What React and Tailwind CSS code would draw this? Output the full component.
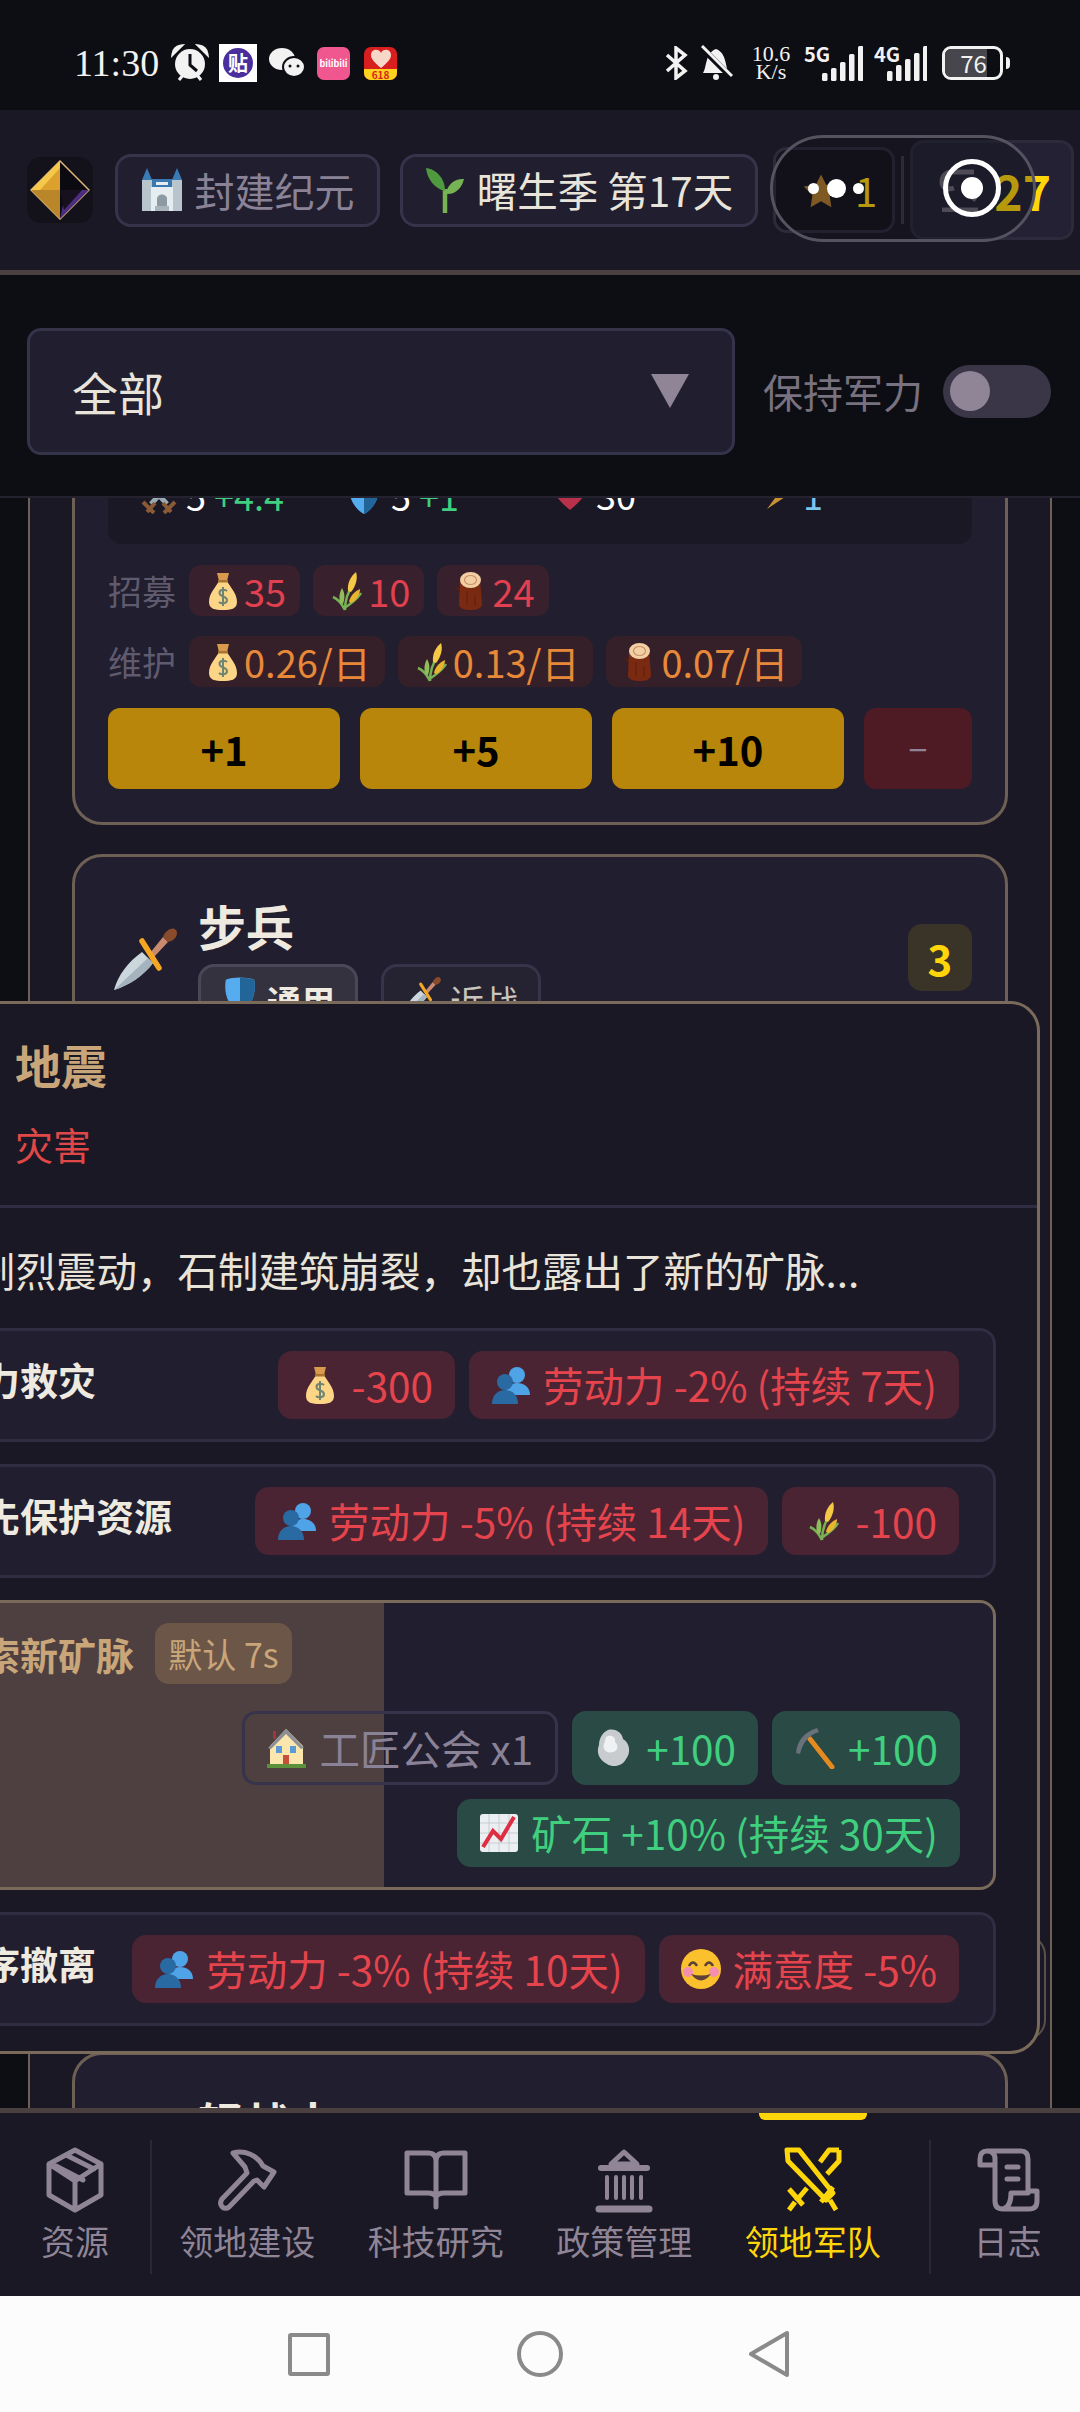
import React from 'react';

const Bag = ({ s = 40 }) => (
  <svg width={s} height={s} viewBox="0 0 40 40" className="shrink-0">
    <path d="M14 2 L26 2 L24 10 L16 10 Z" fill="#d99a4e" />
    <path d="M16 10 H24 C27 16 34 22 34 31 C34 38 28 39 20 39 C12 39 6 38 6 31 C6 22 13 16 16 10 Z" fill="#fcd586" />
    <rect x="15" y="9" width="10" height="2.5" fill="#a8722f" />
    <path d="M24 20 C22 18 16.500 18 16.500 22 C16.500 26 24 25 24 29 C24 33 18 33 16 31 M20 16 V35" stroke="#6f8572" strokeWidth="2" fill="none" />
  </svg>
);

const Corn = ({ s = 40 }) => (
  <svg width={s} height={s} viewBox="0 0 40 40" className="shrink-0">
    <path d="M18 39 C18 30 20 22 26 14 M18 39 C15 33 11 28 6 26 M19 36 C24 32 30 29 34 22" stroke="#76b255" strokeWidth="2.500" fill="none" />
    <path d="M21 20 C20 12 24 5 29 1 C31 7 29 15 24 21 Z" fill="#f6c944" />
    <path d="M22 31 C23 25 28 20 33 18 C33 24 29 30 24 32 Z" fill="#e9b52f" />
    <path d="M13 32 C12 27 12 22 15 17 C18 22 18 27 16 33 Z" fill="#8fbd5c" />
  </svg>
);

const Log = ({ s = 40 }) => (
  <svg width={s} height={s} viewBox="0 0 40 40" className="shrink-0">
    <path d="M9 9 H29 L31 33 C31 38 24 39 20 39 C14 39 9 38 8 34 Z" fill="#7b2a12" />
    <path d="M9 18 L4 15 L9 22 Z" fill="#5e1f0c" />
    <ellipse cx="19.500" cy="9" rx="10.500" ry="8" fill="#f3cfa4" />
    <ellipse cx="19.500" cy="9" rx="6" ry="4.500" fill="none" stroke="#c9926a" strokeWidth="1.200" />
    <path d="M16 20 V34 M24 24 V35" stroke="#5e1f0c" strokeWidth="1" />
  </svg>
);

const People = ({ s = 40 }) => (
  <svg width={s} height={s} viewBox="0 0 40 40" className="shrink-0">
    <circle cx="26" cy="10" r="8" fill="#4fa4e8" />
    <path d="M14 30 C14 22 20 18 26 18 C33 18 39 22 39 30 Z" fill="#4fa4e8" />
    <circle cx="14" cy="17" r="8" fill="#2a6aa3" />
    <path d="M1 39 C1 30 7 25 14 25 C21 25 27 30 27 39 Z" fill="#2a6aa3" />
  </svg>
);

const Rock = ({ s = 40 }) => (
  <svg width={s} height={s} viewBox="0 0 40 40" className="shrink-0">
    <path d="M14 2 C22 0 28 5 29 11 C36 15 37 25 32 31 C29 38 19 40 13 36 C5 32 2 24 5 17 C5 10 9 4 14 2 Z" fill="#c9ccce" />
    <path d="M12 9 C17 6 22 9 21 14 C25 17 24 23 19 24 C13 26 8 21 10 16 Z" fill="#f0f1f2" />
  </svg>
);

const Pick = ({ s = 42 }) => (
  <svg width={s} height={s} viewBox="0 0 42 42" className="shrink-0">
    <path d="M16 12 L38 40" stroke="#e58a1f" strokeWidth="5" strokeLinecap="round" />
    <path d="M2 26 C3 14 10 5 23 1 L25 5 C15 8 9 15 6 27 Z" fill="#69717a" />
  </svg>
);

const Chart = ({ s = 40 }) => (
  <svg width={s} height={s} viewBox="0 0 40 40" className="shrink-0">
    <rect x="1" y="1" width="38" height="38" rx="3" fill="#eceff1" />
    <path d="M10 1 V39 M20 1 V39 M30 1 V39 M1 10 H39 M1 20 H39 M1 30 H39" stroke="#c4cdd3" strokeWidth="1" />
    <path d="M4 34 L14 18 L22 26 L35 4" stroke="#dd2e44" strokeWidth="4" fill="none" />
  </svg>
);

const House = ({ s = 40 }) => (
  <svg width={s} height={s} viewBox="0 0 40 40" className="shrink-0">
    <path d="M3 18 L19 1 L36 18 V36 H3 Z" fill="#fbe6ad" />
    <path d="M1 20 L19 1 L37 20 L34 21 L19 6 L4 21 Z" fill="#8d8f96" />
    <rect x="9" y="18" width="6" height="7" fill="#5b9bd5" />
    <rect x="23" y="18" width="6" height="7" fill="#5b9bd5" />
    <rect x="16" y="27" width="6" height="9" fill="#c94f3d" />
    <rect x="0" y="36" width="39" height="4" fill="#5c913b" />
    <rect x="6" y="3" width="3" height="8" fill="#a0383a" />
  </svg>
);

const Smile = ({ s = 40 }) => (
  <svg width={s} height={s} viewBox="0 0 40 40" className="shrink-0">
    <circle cx="20" cy="20" r="20" fill="#fbc02d" />
    <circle cx="7" cy="23" r="5" fill="#f48fb1" />
    <circle cx="33" cy="23" r="5" fill="#f48fb1" />
    <path d="M8 17 Q12 10 16 17 M24 17 Q28 10 32 17" stroke="#5d4037" strokeWidth="2.500" fill="none" />
    <path d="M10 25 Q20 38 30 25 Q20 28 10 25 Z" fill="#5d4037" />
  </svg>
);

const Dagger = ({ s = 66 }) => (
  <svg width={s} height={s} viewBox="0 0 66 66" className="shrink-0">
    <path d="M1 65 C5 50 15 37 29 27 L40 38 C31 50 17 60 1 65 Z" fill="#ccd6dd" />
    <path d="M1 65 L35 33 L40 38 C31 50 17 60 1 65 Z" fill="#a4b3bd" />
    <path d="M37 28 L50 12 L55 17 L41 32 Z" fill="#c98a6f" />
    <path d="M50 12 C52 5 60 1 63 5 C66 9 62 16 55 17 Z" fill="#8a4b2d" />
    <path d="M29 16 L46 43" stroke="#f5a623" strokeWidth="5.500" strokeLinecap="round" />
  </svg>
);

const Shield = ({ s = 40 }) => (
  <svg width={s} height={s} viewBox="0 0 40 40" className="shrink-0">
    <path d="M5 5 C12 2 28 2 35 5 C37 18 34 32 20 40 C6 32 3 18 5 5 Z" fill="#55acee" />
    <path d="M20 3 C26 3 31 4 35 5 C37 18 34 32 20 40 Z" fill="#226699" />
  </svg>
);

const Swords = ({ s = 38 }) => (
  <svg width={s} height={s} viewBox="0 0 38 38" className="shrink-0">
    <path d="M3 2 L27 28 M35 2 L11 28" stroke="#99aab5" strokeWidth="5" />
    <path d="M7 36 L15 27 M31 36 L23 27 M3 26 L14 37 M35 26 L24 37" stroke="#8a5a36" strokeWidth="4" />
  </svg>
);

const Heart = ({ s = 36 }) => (
  <svg width={s} height={s} viewBox="0 0 36 36" className="shrink-0">
    <path d="M18 34 C6 24 1 17 1 10 C1 -2 14 -3 18 6 C22 -3 35 -2 35 10 C35 17 30 24 18 34 Z" fill="#b9304a" />
  </svg>
);

const Bolt = ({ s = 30 }) => (
  <svg width={s} height={s} viewBox="0 0 30 30" className="shrink-0">
    <path d="M24 0 L2 30 L26 14 Z" fill="#c99134" />
  </svg>
);

const Castle = () => (
  <svg width="42" height="44" viewBox="0 0 42 44" className="shrink-0">
    <path d="M6 0 L11 12 H1 Z M36 0 L41 12 H31 Z" fill="#3b7bb5" />
    <path d="M10 11 H32 L34 19 H8 Z" fill="#3b78ad" />
    <rect x="1" y="12" width="10" height="31" fill="#b8c5cd" />
    <rect x="31" y="12" width="10" height="31" fill="#b8c5cd" />
    <rect x="10" y="19" width="22" height="24" fill="#e6edf1" />
    <path d="M16 43 V31 C16 25 26 25 26 31 V43 Z" fill="#8b9aa3" />
    <rect x="14" y="38" width="14" height="5" fill="#a9b4bb" />
    <rect x="15" y="14" width="12" height="3" fill="#e6edf1" />
  </svg>
);

const Sprout = () => (
  <svg width="40" height="46" viewBox="0 0 40 46" className="shrink-0">
    <path d="M20 46 V22" stroke="#77b255" strokeWidth="4.500" />
    <path d="M20 24 C20 10 10 2 1 1 C2 12 10 22 20 24 Z" fill="#4f9a3f" />
    <path d="M21 27 C22 17 31 11 39 12 C37 21 30 28 21 27 Z" fill="#77b255" />
  </svg>
);

const Logo = () => (
  <div className="flex h-[66px] w-[66px] shrink-0 items-center justify-center rounded-[14px] bg-[#13121b]">
    <svg width="60" height="60" viewBox="0 0 60 60">
      <path d="M30 1 L59 30 L30 59 L1 30 Z" fill="#0b0a10" stroke="#e0b878" strokeWidth="1.500" />
      <path d="M30 1 L1 30 H30 Z" fill="#f5c84a" />
      <path d="M30 30 H1 L30 59 Z" fill="#b9862a" />
      <path d="M30 8 L10 30 H30 Z" fill="#dca02f" />
      <path d="M59 30 H36 L30 59 Z" fill="#4b2d7f" />
      <path d="M30 30 H52 L34 50 Z" fill="#16101f" />
    </svg>
  </div>
);

const Chip = ({ tone = 'red', icon, children, className = '' }) => {
  const tones = {
    red: 'bg-[#4a2433] text-[#e5444d]',
    green: 'bg-[#2a4a45] text-[#3fcf7f]',
    lock: 'border-[3px] border-[#36334a] text-[#8a8296]',
  };
  return (
    <div className={`relative flex h-[68px] shrink-0 items-center gap-[12px] whitespace-nowrap rounded-[14px] px-[22px] text-[40.5px] ${tones[tone]} ${className}`}>
      {icon}
      <span>{children}</span>
    </div>
  );
};

const Cost = ({ icon, children, orange }) => (
  <div className={`flex h-[51px] items-center gap-[1px] rounded-[12px] px-[14px] text-[38px] ${orange ? 'bg-[#352029] text-[#e8893a]' : 'bg-[#38202d] text-[#e0404f]'}`}>
    {icon}
    <span>{children}</span>
  </div>
);

const Stat = ({ icon, value, bonus, valueClass = 'text-white' }) => (
  <div className="flex items-center gap-[8px] text-[36px] leading-none">
    {icon}
    <span className={valueClass}>{value}</span>
    {bonus && <span className="text-[#3fcf7f]">{bonus}</span>}
  </div>
);

const BuyButton = ({ children }) => (
  <button className="h-[81px] flex-1 rounded-[12px] bg-[#b8860b] text-[40px] font-bold text-black">{children}</button>
);

const Tag = ({ active, icon, children }) => (
  <div className={`flex h-[70px] w-[160px] items-start justify-center gap-[8px] rounded-t-[16px] border-[3px] pt-[8px] text-[34px] ${active ? 'border-[#4a4858] bg-[#34323f] font-bold text-[#f0ebe1]' : 'border-[#36344a] bg-[#252331] text-[#c9c4bc]'}`}>
    {icon}
    {children}
  </div>
);

const Option = ({ title, children }) => (
  <div className="flex h-[114px] items-center justify-between rounded-[16px] border-[3px] border-[#2f2d42] bg-[#201e2f] px-[34px]">
    <span className="mb-[14px] whitespace-nowrap text-[38px] font-bold text-[#efeae0]">{title}</span>
    <div className="flex gap-[14px]">{children}</div>
  </div>
);

const navIcon = { fill: 'none', stroke: 'currentColor', strokeWidth: 5, strokeLinejoin: 'round', strokeLinecap: 'round' };

const BoxIcon = () => (
  <svg width="60" height="66" viewBox="0 0 60 66" {...navIcon}>
    <path d="M30 3 L56 17 V48 L30 63 L4 48 V17 Z M4 17 L30 34 L56 17 M30 34 V63 M23 9 L49 22 M11 19 L38 33" />
  </svg>
);
const HammerIcon = () => (
  <svg width="60" height="66" viewBox="0 0 60 66" {...navIcon}>
    <path d="M16 6 C28 3 40 8 46 19 L57 25 L51 34 L47 40 L40 33 L37 34 L12 60 C7 64 1 58 5 52 L30 26 L28 20 Z" />
  </svg>
);
const BookIcon = () => (
  <svg width="68" height="66" viewBox="0 0 68 66" {...navIcon}>
    <path d="M5 6 H26 Q34 6 34 14 Q34 6 42 6 H63 V46 H42 Q36 46 34 50 Q32 46 26 46 H5 Z M34 14 V60" />
  </svg>
);
const BankIcon = () => (
  <svg width="60" height="66" viewBox="0 0 60 66" {...navIcon}>
    <path d="M30 5 L43 17 H17 Z" />
    <path d="M7 21 H53" strokeWidth="6" />
    <path d="M13 30 V51 M22 30 V51 M30 30 V51 M38 30 V51 M47 30 V51" strokeWidth="4" />
    <path d="M5 62 H55" strokeWidth="7" />
  </svg>
);
const SwordsIcon = () => (
  <svg width="60" height="66" viewBox="0 0 60 66" {...navIcon} strokeLinecap="butt">
    <path d="M4 3 H16 L50 46 L43 53 L5 14 Z M56 3 H46 L37 15 M56 3 V14 L44 27 M24 41 L13 54 M6 42 L20 58 M12 55 L6 63 M50 40 L38 55 M47 53 L53 63" />
  </svg>
);
const ScrollIcon = () => (
  <svg width="66" height="66" viewBox="0 0 66 66" {...navIcon}>
    <path d="M12 4 H46 Q53 4 53 12 V44 H62 V54 Q62 62 54 62 H28 Q20 62 20 54 V18 H5 V12 Q5 4 12 4 Q20 4 20 12 V18 M28 62 Q36 60 36 46 H53 M32 20 H43 M32 32 H43" />
  </svg>
);

const NavItem = ({ icon, label, className = '', active }) => (
  <div className={`flex flex-col items-center justify-start ${active ? 'text-[#ffd60a]' : 'text-[#8f8596]'} ${className}`}>
    <div className="flex h-[66px] items-center justify-center">{icon}</div>
    <span className="mt-[5px] whitespace-nowrap text-[34px] leading-[46px]">{label}</span>
  </div>
);

const Signal = ({ label, start, heights, width }) => (
  <svg width={width} height="36" viewBox={`0 0 ${width} 36`} className="shrink-0" fill="#f2f2f2">
    <text x="0" y="17" fontSize="20" fontWeight="700">{label}</text>
    {heights.map((h, i) => (
      <rect key={i} x={start + i * 9} y={36 - h} width="5.500" height={h} rx="1.500" />
    ))}
  </svg>
);

function StatusBar() {
  return (
    <div className="flex h-[110px] shrink-0 items-center bg-[#0d0d14] pl-[74px] pr-[70px] pt-[16px] text-[#f2f2f2]">
      <span className="w-[97px] shrink-0 font-['Liberation_Serif',serif] text-[38px] leading-none">11:30</span>
      <svg width="38" height="38" viewBox="0 0 38 38" className="shrink-0">
        <circle cx="19" cy="20" r="15" fill="#f2f2f2" />
        <path d="M2 10 Q3 3 10 2 Z M36 10 Q35 3 28 2 Z M8 36 L12 31 M30 36 L26 31" stroke="#f2f2f2" strokeWidth="3" fill="#f2f2f2" />
        <path d="M19 10 V21 L26 27" stroke="#0d0d14" strokeWidth="3" fill="none" />
      </svg>
      <div className="ml-[10px] flex h-[38px] w-[38px] shrink-0 items-center justify-center bg-white">
        <div className="flex h-[30px] w-[30px] items-center justify-center rounded-full bg-[#4a2f9c] text-[20px] font-bold leading-none text-white">贴</div>
      </div>
      <svg width="38" height="34" viewBox="0 0 38 34" className="ml-[11px] shrink-0">
        <ellipse cx="14" cy="13" rx="13" ry="11" fill="#f2f2f2" />
        <ellipse cx="26" cy="21" rx="11" ry="10" fill="#f2f2f2" stroke="#0d0d14" strokeWidth="2" />
        <circle cx="22" cy="20" r="1.500" fill="#0d0d14" />
        <circle cx="30" cy="20" r="1.500" fill="#0d0d14" />
      </svg>
      <div className="ml-[11px] flex h-[33px] w-[33px] shrink-0 items-center justify-center rounded-[7px] bg-[#f0578e] text-[9px] font-bold leading-none text-white">bilibili</div>
      <div className="relative ml-[14px] flex h-[33px] w-[33px] shrink-0 flex-col items-center justify-between overflow-hidden rounded-[7px] bg-[#d81e1e]">
        <svg width="20" height="19" viewBox="0 0 20 19" className="mt-[2px]">
          <path d="M10 19 C3 13 0 10 0 6 C0 0 8 -1 10 4 C12 -1 20 0 20 6 C20 10 17 13 10 19 Z" fill="#f6d7c8" />
        </svg>
        <div className="w-full bg-[#ffd21f] text-center text-[10px] font-bold leading-[11px] text-[#d81e1e]">618</div>
      </div>
      <div className="flex-1" />
      <svg width="24" height="34" viewBox="0 0 24 34" className="shrink-0">
        <path d="M2 9 L20 25 L11 32 V2 L20 9 L2 25" stroke="#f2f2f2" strokeWidth="3.500" fill="none" />
      </svg>
      <svg width="34" height="36" viewBox="0 0 34 36" className="ml-[10px] shrink-0">
        <path d="M4 28 C8 22 6 8 17 4 C28 8 26 22 30 28 Z" fill="#f2f2f2" />
        <circle cx="17" cy="32" r="3" fill="#f2f2f2" />
        <path d="M2 2 L32 32" stroke="#0d0d14" strokeWidth="6" />
        <path d="M3 1 L33 31" stroke="#f2f2f2" strokeWidth="3" />
      </svg>
      <div className="ml-[18px] w-[40px] shrink-0 text-center font-['Liberation_Serif',serif] text-[22px] leading-[18px]">
        <div>10.6</div>
        <div>K/s</div>
      </div>
      <div className="ml-[13px]"><Signal label="5G" width={59} start={18} heights={[8, 13, 19, 27, 35]} /></div>
      <div className="ml-[11px]"><Signal label="4G" width={53} start={13} heights={[10, 16, 22, 28, 35]} /></div>
      <div className="ml-[15px] flex h-[34px] w-[61px] shrink-0 items-center overflow-hidden rounded-[9px] border-[3px] border-[#f2f2f2]">
        <div className="flex h-full w-[76%] items-center justify-end bg-[#46464c] text-[24px] leading-none">76</div>
      </div>
      <div className="ml-[3px] h-[12px] w-[4px] shrink-0 rounded-r bg-[#f2f2f2]" />
    </div>
  );
}

function TopBar() {
  return (
    <div className="relative flex h-[165px] shrink-0 items-center overflow-hidden border-b-[5px] border-[#4a4040] bg-[#1a1825] pl-[27px]">
      <Logo />
      <div className="ml-[22px] flex h-[73px] w-[265px] shrink-0 items-center justify-center gap-[12px] rounded-[16px] border-[3px] border-[#36344a] bg-[#201e2f] text-[40px] text-[#8a8296]">
        <Castle />
        <span>封建纪元</span>
      </div>
      <div className="ml-[20px] flex h-[73px] w-[358px] shrink-0 items-center justify-center gap-[12px] whitespace-nowrap rounded-[16px] border-[3px] border-[#36344a] bg-[#201e2f] text-[40.5px] text-[#e9e4da]">
        <Sprout />
        <span>曙生季 第17天</span>
      </div>
      <div className="ml-[15px] flex h-[86px] w-[122px] shrink-0 items-center gap-[15px] rounded-[14px] border-[3px] border-[#2c2a3b] bg-[#15141e] pl-[26px]">
        <svg width="38" height="38" viewBox="0 0 44 44" className="shrink-0">
          <path d="M22 4 L28 16 L42 18 L32 28 L34 42 L22 35 L10 42 L12 28 L2 18 L16 16 Z" fill="#b07a2a" />
        </svg>
        <span className="text-[40px] leading-none text-[#ffd60a]">1</span>
      </div>
      <div className="mx-[6px] h-[68px] w-[3px] shrink-0 bg-[#3a384a]" />
      <div className="flex h-[100px] w-[164px] shrink-0 items-center justify-end gap-[6px] rounded-[14px] border-[3px] border-[#2c2a3b] bg-[#232133] pr-[20px]">
        <svg width="50" height="44" viewBox="0 0 50 44" className="shrink-0" fill="none" stroke="#6b6675" strokeWidth="5">
          <path d="M12 4 H36 M14 4 C8 4 4 8 4 14 C4 20 10 22 16 20 M26 22 L38 32 M4 42 H40" />
        </svg>
        <span className="text-[48px] font-bold leading-none text-[#ffd60a]">27</span>
      </div>

      {/* floating capsule of the host app, lies over the header */}
      <div className="absolute left-[770px] top-[25px] h-[107px] w-[266px] rounded-full border-[3px] border-[#55535f] bg-[#0d0d14]/30">
        <span className="absolute left-[35px] top-[45px] h-[11px] w-[11px] rounded-full bg-white" />
        <span className="absolute left-[54px] top-[41px] h-[19px] w-[19px] rounded-full bg-white" />
        <span className="absolute left-[80px] top-[45px] h-[11px] w-[11px] rounded-full bg-white" />
        <span className="absolute left-[170px] top-[21px] flex h-[58px] w-[58px] items-center justify-center rounded-full border-[5px] border-white">
          <span className="h-[22px] w-[22px] rounded-full bg-white" />
        </span>
      </div>
    </div>
  );
}

function FilterBar() {
  return (
    <div className="flex h-[223px] shrink-0 items-center border-b-[2px] border-[#23222e] bg-[#0d0d14] pl-[27px] pt-[11px]">
      <div className="flex h-[127px] w-[708px] items-center justify-between rounded-[14px] border-[3px] border-[#35334a] bg-[#201e2f] pl-[42px] pr-[43px]">
        <span className="text-[46px] text-[#e9e4da]">全部</span>
        <svg width="38" height="34" viewBox="0 0 38 34">
          <path d="M0 0 H38 L19 34 Z" fill="#8f8596" />
        </svg>
      </div>
      <span className="ml-[28px] text-[40px] text-[#78717f]">保持军力</span>
      <div className="ml-[20px] flex h-[53px] w-[108px] items-center rounded-full bg-[#3a3648] pl-[7px]">
        <span className="h-[40px] w-[40px] rounded-full bg-[#8f8596]" />
      </div>
    </div>
  );
}

function UnitList() {
  return (
    <div className="min-h-0 flex-1 overflow-hidden bg-[#0d0d14] px-[28px]">
      <div className="flow-root h-full border-x-2 border-[#6e6054] bg-[#1a1825] px-[42px]">
        <div className="-mt-[62px] rounded-[30px] border-[3px] border-[#6e6054] bg-[#201e2f] px-[33px] pb-[33px] pt-[21px]">
          <div className="grid h-[84px] grid-cols-[205px_207px_213px_1fr] items-start rounded-[14px] bg-[#1a1825] pl-[32px] pt-[16px]">
            <Stat icon={<Swords />} value="5" bonus="+4.4" />
            <Stat icon={<Shield s={38} />} value="5" bonus="+1" />
            <Stat icon={<Heart />} value="30" />
            <Stat icon={<Bolt />} value="1" valueClass="text-[#7cc4f0]" />
          </div>
          <div className="mt-[21px] flex items-center gap-[13px]">
            <span className="w-[68px] shrink-0 whitespace-nowrap text-[34px] leading-none text-[#5f5a6e]">招募</span>
            <Cost icon={<Bag />}>35</Cost>
            <Cost icon={<Corn />}>10</Cost>
            <Cost icon={<Log />}>24</Cost>
          </div>
          <div className="mt-[20px] flex items-center gap-[13px]">
            <span className="w-[68px] shrink-0 whitespace-nowrap text-[34px] leading-none text-[#5f5a6e]">维护</span>
            <Cost orange icon={<Bag />}>0.26/日</Cost>
            <Cost orange icon={<Corn />}>0.13/日</Cost>
            <Cost orange icon={<Log />}>0.07/日</Cost>
          </div>
          <div className="mt-[21px] flex gap-[20px]">
            <BuyButton>+1</BuyButton>
            <BuyButton>+5</BuyButton>
            <BuyButton>+10</BuyButton>
            <button className="h-[81px] w-[108px] rounded-[12px] bg-[#4e1a24] text-[34px] text-[#8f8596]">−</button>
          </div>
        </div>

        <div className="mt-[29px] h-[1169px] rounded-[30px] border-[3px] border-[#6e6054] bg-[#201e2f] px-[33px] pt-[38px]">
          <div className="flex items-start">
            <div className="mt-[30px] w-[90px] shrink-0 pl-[5px]"><Dagger /></div>
            <div className="flex-1">
              <div className="text-[48px] font-bold leading-[60px] text-[#efeae0]">步兵</div>
              <div className="mt-[9px] flex gap-[23px]">
                <Tag active icon={<Shield s={38} />}>通用</Tag>
                <Tag icon={<Dagger s={38} />}>近战</Tag>
              </div>
            </div>
            <div className="mt-[29px] flex h-[67px] w-[64px] items-center justify-center rounded-[14px] bg-[#3a3428] text-[42px] font-bold text-[#ffd60a]">3</div>
          </div>
        </div>

        <div className="mt-[29px] rounded-[30px] border-[3px] border-[#6e6054] bg-[#201e2f] px-[33px] pt-[36px]">
          <div className="pl-[90px] text-[46px] font-bold leading-[60px] text-[#efeae0]">轻战士</div>
        </div>
      </div>
    </div>
  );
}

function EventDialog() {
  return (
    <>
      <div className="absolute left-[1000px] top-[1935px] h-[105px] w-[46px] rounded-r-[20px] border-y-2 border-r-2 border-[#5a4f4a]" />
      <div className="absolute left-[-138px] top-[1001px] h-[1053px] w-[1178px] overflow-hidden rounded-[30px] border-[3px] border-[#7a6a5a] bg-[#1a1825]">
        <div className="h-[204px] border-b-[3px] border-[#2f2d42] pl-[150px] pt-[27px]">
          <div className="text-[46px] font-bold leading-[66px] text-[#c9a57a]">地震</div>
          <div className="mt-[22px] text-[38px] leading-[50px] text-[#e04848]">灾害</div>
        </div>
        <p className="ml-[29px] mt-[33px] whitespace-nowrap text-[40.5px] leading-[58px] text-[#e9e4da]">大地剧烈震动，石制建筑崩裂，却也露出了新的矿脉...</p>
        <div className="mt-[29px] flex flex-col gap-[22px] pl-[42px] pr-[41px]">
          <Option title="全力救灾">
            <Chip icon={<Bag />}>-300</Chip>
            <Chip icon={<People />}>劳动力 -2% (持续 7天)</Chip>
          </Option>
          <Option title="优先保护资源">
            <Chip icon={<People />}>劳动力 -5% (持续 14天)</Chip>
            <Chip icon={<Corn />}>-100</Chip>
          </Option>
          <div className="relative h-[290px] overflow-hidden rounded-[16px] border-[3px] border-[#7a6a5a] bg-[#201e2f] pl-[34px] pr-[33px]">
            <div className="absolute bottom-0 left-0 top-0 w-[474px] bg-[#4e4040]" />
            <div className="relative mt-[20px] flex h-[61px] items-center gap-[21px]">
              <span className="whitespace-nowrap text-[38px] font-bold text-[#c9a57a]">探索新矿脉</span>
              <span className="flex h-[61px] w-[137px] items-center justify-center whitespace-nowrap rounded-[14px] bg-[#6b5648] text-[34px] text-[#c9a57a]">默认 7s</span>
            </div>
            <div className="mt-[27px] flex justify-end gap-[14px]">
              <Chip tone="lock" icon={<House />} className="h-[74px]">工匠公会 x1</Chip>
              <Chip tone="green" icon={<Rock />} className="h-[74px]">+100</Chip>
              <Chip tone="green" icon={<Pick />} className="h-[74px]">+100</Chip>
            </div>
            <div className="mt-[14px] flex justify-end">
              <Chip tone="green" icon={<Chart />}>矿石 +10% (持续 30天)</Chip>
            </div>
          </div>
          <Option title="有序撤离">
            <Chip icon={<People />}>劳动力 -3% (持续 10天)</Chip>
            <Chip icon={<Smile />}>满意度 -5%</Chip>
          </Option>
        </div>
      </div>
    </>
  );
}

function BottomNav() {
  return (
    <div className="relative flex h-[188px] shrink-0 border-t-[5px] border-[#4a4040] bg-[#1a1825] pt-[34px]">
      <div className="absolute left-[759px] top-0 h-[7px] w-[108px] rounded-b-[6px] bg-[#ffd60a]" />
      <NavItem icon={<BoxIcon />} label="资源" className="w-[150px]" />
      <div className="h-[134px] w-[2px] shrink-0 -translate-y-[7px] bg-[#2a2835]" />
      <div className="grid w-[777px] grid-cols-[repeat(4,188.5px)] pl-[1px]">
        <NavItem icon={<HammerIcon />} label="领地建设" />
        <NavItem icon={<BookIcon />} label="科技研究" />
        <NavItem icon={<BankIcon />} label="政策管理" />
        <NavItem icon={<SwordsIcon />} label="领地军队" active />
      </div>
      <div className="h-[134px] w-[2px] shrink-0 -translate-y-[7px] bg-[#2a2835]" />
      <NavItem icon={<ScrollIcon />} label="日志" className="flex-1 pl-[4px]" />
    </div>
  );
}

function AndroidNav() {
  return (
    <div className="flex h-[116px] shrink-0 items-center bg-[#fcfcfc] pl-[288px]">
      <div className="h-[43px] w-[42px] rounded-[3px] border-[4px] border-[#8a8a8a]" />
      <div className="ml-[187px] h-[46px] w-[46px] rounded-full border-[4px] border-[#8a8a8a]" />
      <svg width="42" height="48" viewBox="0 0 42 48" className="ml-[185px]">
        <path d="M39 3 V45 L3 24 Z" fill="none" stroke="#8a8a8a" strokeWidth="4" strokeLinejoin="round" />
      </svg>
    </div>
  );
}

export default function App() {
  return (
    <div className="relative flex h-[2412px] w-[1080px] flex-col overflow-hidden bg-[#0d0d14] font-['Noto_Sans_CJK_SC','Noto_Sans',sans-serif]">
      <StatusBar />
      <TopBar />
      <FilterBar />
      <UnitList />
      <BottomNav />
      <AndroidNav />
      <EventDialog />
    </div>
  );
}
